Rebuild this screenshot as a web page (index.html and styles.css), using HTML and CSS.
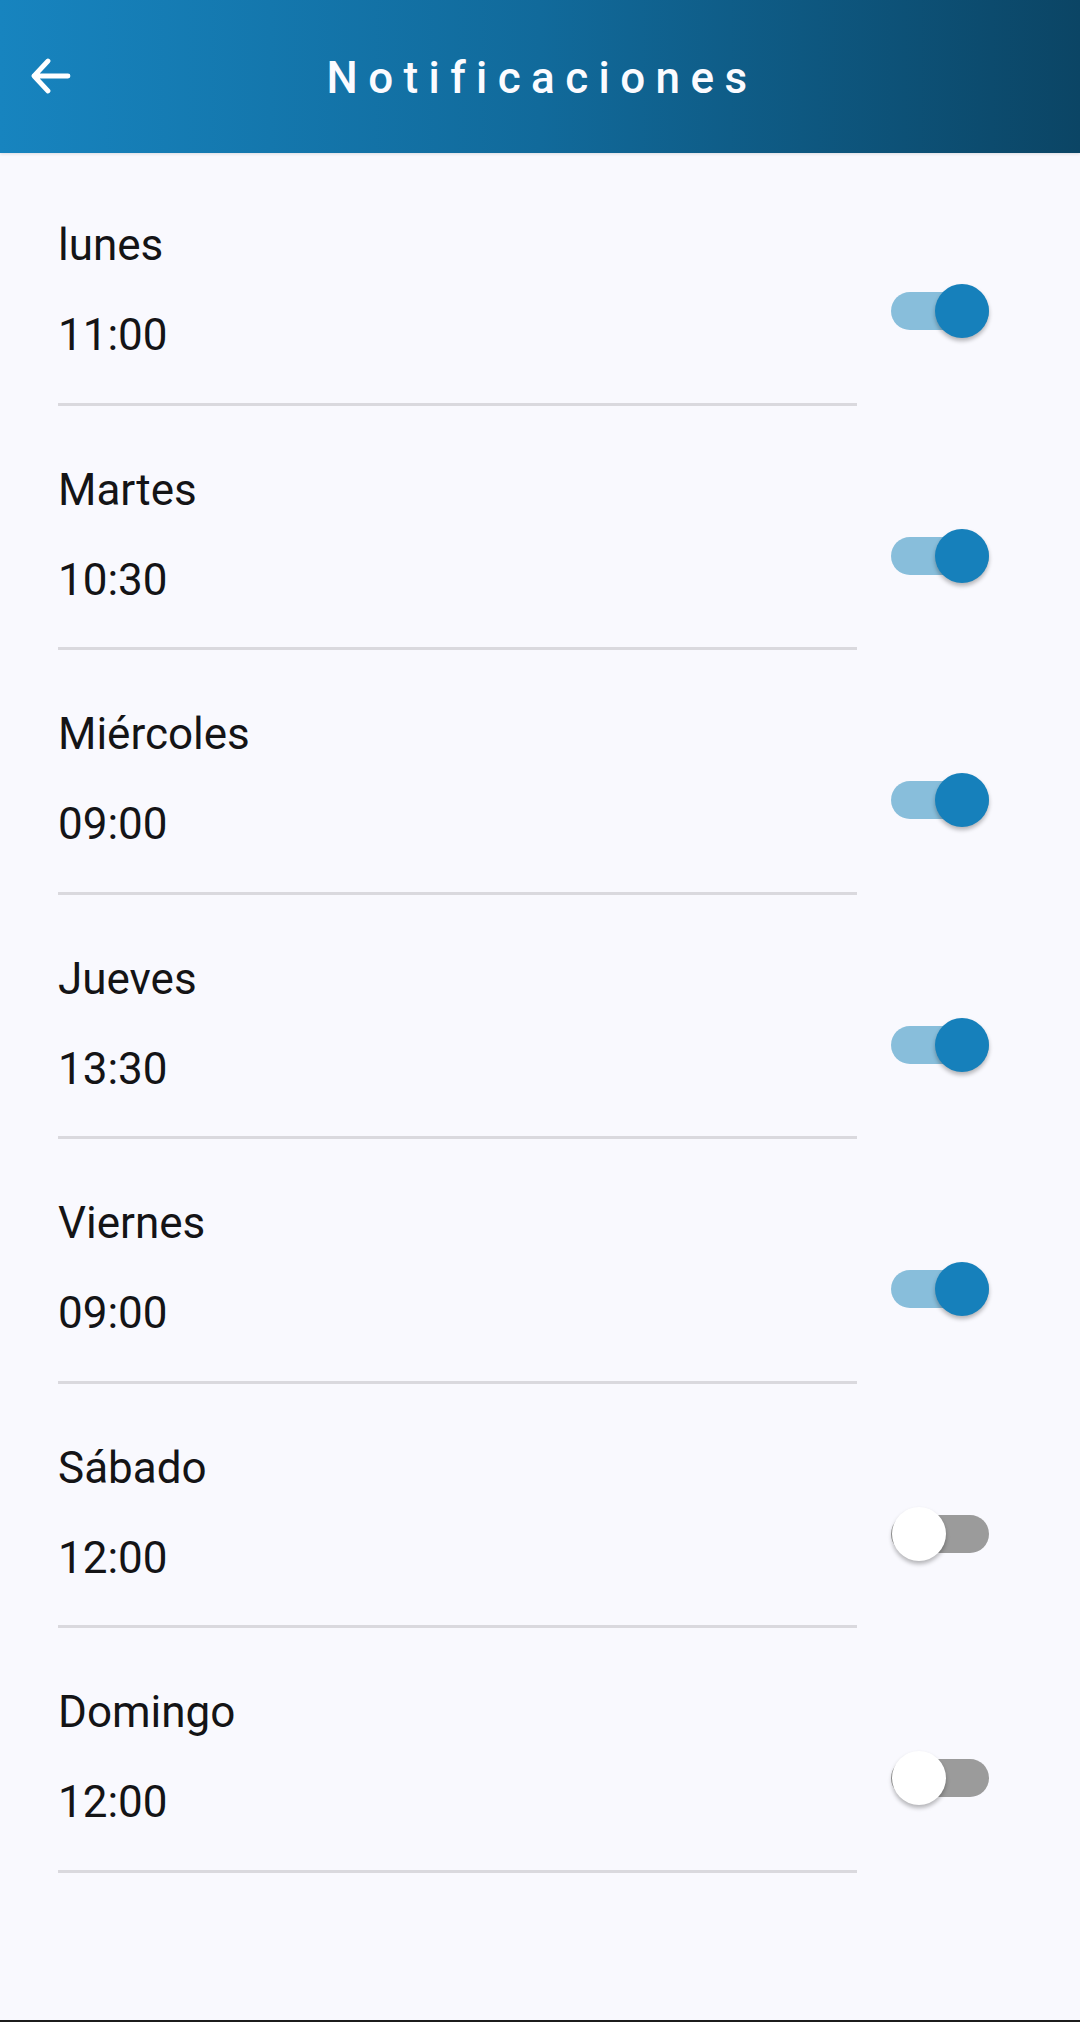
FILE: index.html
```html
<!DOCTYPE html>
<html lang="es">
<head>
    <meta charset="UTF-8">
    <meta name="viewport" content="width=device-width, initial-scale=1.0">
    <title>Notificaciones</title>
    <link rel="stylesheet" href="styles.css">
</head>
<body>

<div class="screen">
    <header class="app-bar">
        <button class="back-btn" aria-label="Volver">
            <svg width="44" height="40" viewBox="0 0 44 40">
                <path d="M4 18 H38 M18 3 L4 18 L18 33" fill="none" stroke="#fff" stroke-width="4.8" stroke-linecap="round" stroke-linejoin="round"/>
            </svg>
        </button>
        <h1 class="title">Notificaciones</h1>
        <span></span>
    </header>

    <div class="day-list">
        <div class="day-item">
            <div class="day-info">
                <p class="day-name">lunes</p>
                <p class="day-time">11:00</p>
            </div>
            <div class="switch on"><span class="track"></span><span class="thumb"></span></div>
        </div>
        <div class="day-item">
            <div class="day-info">
                <p class="day-name">Martes</p>
                <p class="day-time">10:30</p>
            </div>
            <div class="switch on"><span class="track"></span><span class="thumb"></span></div>
        </div>
        <div class="day-item">
            <div class="day-info">
                <p class="day-name">Miércoles</p>
                <p class="day-time">09:00</p>
            </div>
            <div class="switch on"><span class="track"></span><span class="thumb"></span></div>
        </div>
        <div class="day-item">
            <div class="day-info">
                <p class="day-name">Jueves</p>
                <p class="day-time">13:30</p>
            </div>
            <div class="switch on"><span class="track"></span><span class="thumb"></span></div>
        </div>
        <div class="day-item">
            <div class="day-info">
                <p class="day-name">Viernes</p>
                <p class="day-time">09:00</p>
            </div>
            <div class="switch on"><span class="track"></span><span class="thumb"></span></div>
        </div>
        <div class="day-item">
            <div class="day-info">
                <p class="day-name">Sábado</p>
                <p class="day-time">12:00</p>
            </div>
            <div class="switch"><span class="track"></span><span class="thumb"></span></div>
        </div>
        <div class="day-item">
            <div class="day-info">
                <p class="day-name">Domingo</p>
                <p class="day-time">12:00</p>
            </div>
            <div class="switch"><span class="track"></span><span class="thumb"></span></div>
        </div>
    </div>
</div>

</body>
</html>
```

FILE: styles.css
```css
body {
    font-family: Roboto, 'Noto Sans', sans-serif;
    margin: 0;
    padding: 0;
    background-color: #f9f9fe;
    color: #141416;
}

.screen {
    min-height: 2022px;
    box-sizing: border-box;
    border-bottom: 2px solid #1c1c1c;
}

/* top bar */
.app-bar {
    height: 153px;
    background: linear-gradient(to right, #1784bf, #116a9b 50%, #0b4565);
    display: grid;
    grid-template-columns: 1fr auto 1fr;
    align-items: center;
    box-shadow: 0 1px 3px rgba(0, 0, 0, 0.12);
}

.back-btn {
    background: none;
    border: none;
    padding: 2px 0 0 30px;
    margin: 0;
    width: 100px;
    height: 60px;
    display: flex;
    align-items: center;
    cursor: pointer;
}

.title {
    margin: 0;
    color: #fbfbff;
    font-size: 44px;
    font-weight: 500;
    letter-spacing: 10.4px;
    padding-left: 4px;
    position: relative;
    top: 1px;
}

/* list of days */
.day-list {
    padding-top: 8px;
}

.day-item {
    display: flex;
    align-items: flex-start;
    height: 244.5px;
    margin-left: 58px;
}

.day-info {
    flex: 0 0 799px;
    height: 100%;
    box-sizing: border-box;
    padding-top: 56px;
    border-bottom: 3px solid #dad9de;
}

.day-info p {
    margin: 0;
    font-size: 44px;
    line-height: 56px;
}

.day-info .day-time {
    margin-top: 34px;
}

/* switch */
.switch {
    position: relative;
    width: 98px;
    height: 54px;
    margin-left: 34px;
    margin-top: 123px;
}

.switch .track {
    position: absolute;
    left: 0;
    top: 8px;
    width: 98px;
    height: 38px;
    border-radius: 19px;
    background: #9b9b9b;
}

.switch .thumb {
    position: absolute;
    top: 0;
    left: 1px;
    width: 54px;
    height: 54px;
    border-radius: 50%;
    background: #ffffff;
    box-shadow: 0 3px 4px rgba(0, 0, 0, 0.28);
}

.switch.on .track {
    background: #88bedb;
}

.switch.on .thumb {
    left: 44px;
    background: #1680bb;
}
```
